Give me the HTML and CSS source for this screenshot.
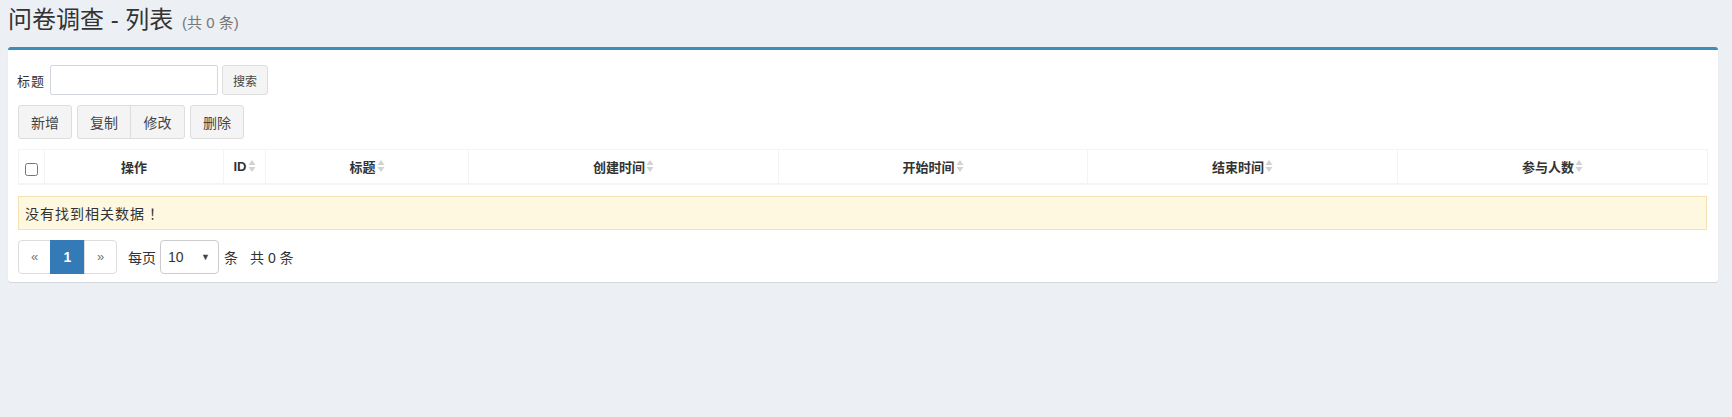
FILE: index.html
```html
<!DOCTYPE html>
<html lang="zh-CN">
<head>
<meta charset="utf-8">
<title>问卷调查 - 列表</title>
<link rel="stylesheet" href="styles.css">
</head>
<body>
<div class="page">
  <header class="content-header">
    <h1>问卷调查 - 列表 <small>(共 0 条)</small></h1>
  </header>
  <section class="box">
    <form class="search-row">
      <label class="search-label">标题</label>
      <input class="search-input" type="text">
      <button type="button" class="btn btn-sm">搜索</button>
    </form>
    <div class="toolbar">
      <button type="button" class="btn">新增</button>
      <div class="btn-group">
        <button type="button" class="btn">复制</button>
        <button type="button" class="btn">修改</button>
      </div>
      <button type="button" class="btn">删除</button>
    </div>
    <table class="data-table">
      <colgroup>
        <col class="c-check"><col class="c-op"><col class="c-id"><col class="c-title">
        <col class="c-wide"><col class="c-wide2"><col class="c-wide"><col class="c-wide">
      </colgroup>
      <thead>
        <tr>
          <th class="th-check"><input type="checkbox" class="chk"></th>
          <th>操作</th>
          <th><span class="sortable">ID<svg class="sort-icon" viewBox="0 0 8 14" width="8" height="14"><path d="M4 1 L7.5 6 H0.5 Z M4 13 L0.5 8 H7.5 Z" fill="#d2d2d2"/></svg></span></th>
          <th><span class="sortable">标题<svg class="sort-icon" viewBox="0 0 8 14" width="8" height="14"><path d="M4 1 L7.5 6 H0.5 Z M4 13 L0.5 8 H7.5 Z" fill="#d2d2d2"/></svg></span></th>
          <th><span class="sortable">创建时间<svg class="sort-icon" viewBox="0 0 8 14" width="8" height="14"><path d="M4 1 L7.5 6 H0.5 Z M4 13 L0.5 8 H7.5 Z" fill="#d2d2d2"/></svg></span></th>
          <th><span class="sortable">开始时间<svg class="sort-icon" viewBox="0 0 8 14" width="8" height="14"><path d="M4 1 L7.5 6 H0.5 Z M4 13 L0.5 8 H7.5 Z" fill="#d2d2d2"/></svg></span></th>
          <th><span class="sortable">结束时间<svg class="sort-icon" viewBox="0 0 8 14" width="8" height="14"><path d="M4 1 L7.5 6 H0.5 Z M4 13 L0.5 8 H7.5 Z" fill="#d2d2d2"/></svg></span></th>
          <th><span class="sortable">参与人数<svg class="sort-icon" viewBox="0 0 8 14" width="8" height="14"><path d="M4 1 L7.5 6 H0.5 Z M4 13 L0.5 8 H7.5 Z" fill="#d2d2d2"/></svg></span></th>
        </tr>
      </thead>
    </table>
    <div class="alert-empty">没有找到相关数据<span class="bang">！</span></div>
    <div class="pager-row">
      <ul class="pagination">
        <li class="page-item">«</li>
        <li class="page-item active">1</li>
        <li class="page-item">»</li>
      </ul>
      <span class="pager-text per-page">每页</span>
      <div class="page-size">
        <span>10</span>
        <span class="caret">▼</span>
      </div>
      <span class="pager-text unit">条</span>
      <span class="pager-text total">共 0 条</span>
    </div>
  </section>
</div>
</body>
</html>
```

FILE: styles.css
```css
* { box-sizing: border-box; }

html, body {
  margin: 0;
  padding: 0;
  background: #ecf0f5;
}

body {
  font-family: "Liberation Sans", "Noto Sans CJK SC", sans-serif;
  font-size: 14px;
  color: #333;
  height: 417px;
}

.page {
  padding: 0 14px 0 8px;
}

.content-header {
  height: 47px;
}

.content-header h1 {
  margin: 0;
  padding-top: 5px;
  font-size: 24px;
  line-height: 30px;
  font-weight: 400;
  color: #333;
}

.content-header h1 small {
  font-size: 15px;
  color: #777;
  padding-left: 2px;
  font-weight: 400;
}

.box {
  background: #fff;
  border-top: 3px solid #3c8dbc;
  border-radius: 3px;
  box-shadow: 0 1px 1px rgba(0, 0, 0, 0.1);
  padding: 15px 11px 9px 10px;
  height: 235px;
}

.search-row {
  display: flex;
  align-items: center;
  height: 30px;
  margin: 0;
}

.search-label {
  font-size: 13px;
  color: #333;
  margin-left: -1px;
  width: 33px;
  letter-spacing: 1px;
}

.search-input {
  width: 168px;
  height: 30px;
  border: 1px solid #d2d6de;
  border-radius: 2px;
  margin: 0 4px 0 0;
  padding: 5px 10px;
  font: inherit;
}

.btn {
  display: inline-flex;
  align-items: center;
  justify-content: center;
  height: 34px;
  padding: 0;
  white-space: nowrap;
  font-family: "Liberation Sans", "Noto Sans CJK SC", sans-serif;
  font-size: 14px;
  color: #444;
  background: #f4f4f4;
  border: 1px solid #ddd;
  border-radius: 3px;
  margin: 0;
}

.btn-sm {
  height: 30px;
  width: 46px;
  font-size: 12px;
}

.toolbar {
  display: flex;
  gap: 5px;
  margin-top: 10px;
  height: 34px;
}

.toolbar > .btn {
  width: 54px;
}

.btn-group {
  display: flex;
}

.btn-group .btn {
  border-radius: 0;
  width: 54px;
}

.btn-group .btn:first-child {
  border-radius: 3px 0 0 3px;
  width: 54px;
}

.btn-group .btn:last-child {
  border-radius: 0 3px 3px 0;
  margin-left: -1px;
  width: 55px;
}

.data-table {
  width: 1689px;
  table-layout: fixed;
  border-collapse: collapse;
  margin-top: 10px;
  border: 1px solid #f4f4f4;
}

.c-check { width: 26px; }
.c-op { width: 179px; }
.c-id { width: 42px; }
.c-title { width: 203px; }
.c-wide { width: 310px; }
.c-wide2 { width: 309px; }

.data-table th {
  height: 34px;
  padding: 0;
  border: 1px solid #f4f4f4;
  border-bottom-width: 2px;
  font-weight: 700;
  font-size: 13px;
  text-align: center;
  vertical-align: middle;
  color: #333;
}

.th-check {
  vertical-align: top;
}

.chk {
  margin: 9px 0 0 0;
  width: 13px;
  height: 13px;
}

.sortable {
  display: inline-flex;
  align-items: center;
}

.sort-icon {
  margin-left: 1px;
}

.alert-empty {
  margin-top: 11px;
  height: 34px;
  display: flex;
  align-items: center;
  padding-left: 6px;
  background: #fff8e1;
  border: 1px solid #f3e2b3;
  color: #333;
  font-size: 14px;
  letter-spacing: 1px;
}

.bang {
  margin-left: 4px;
}

.pager-row {
  display: flex;
  align-items: center;
  margin-top: 10px;
  height: 34px;
}

.pagination {
  display: flex;
  list-style: none;
  margin: 0;
  padding: 0;
}

.page-item {
  height: 34px;
  display: flex;
  align-items: center;
  justify-content: center;
  border: 1px solid #ddd;
  color: #777;
  font-size: 13px;
  width: 33px;
  background: #fff;
}

.page-item:first-child {
  border-radius: 4px 0 0 4px;
}

.page-item:last-child {
  border-radius: 0 4px 4px 0;
  margin-left: -1px;
  width: 33px;
}

.page-item.active {
  background: #337ab7;
  border-color: #337ab7;
  color: #fff;
  font-weight: 700;
  font-size: 14px;
  width: 35px;
  margin-left: -1px;
}

.pager-text {
  font-size: 14px;
  color: #333;
}

.per-page {
  margin-left: 11px;
  margin-right: 4px;
}

.page-size {
  width: 59px;
  height: 34px;
  border: 1px solid #ccc;
  border-radius: 4px;
  display: flex;
  align-items: center;
  justify-content: space-between;
  padding: 0 8px 0 7px;
  font-size: 14px;
  color: #333;
}

.caret {
  font-size: 9px;
  color: #444;
}

.unit {
  margin-left: 5px;
}

.total {
  margin-left: 12px;
}
```
